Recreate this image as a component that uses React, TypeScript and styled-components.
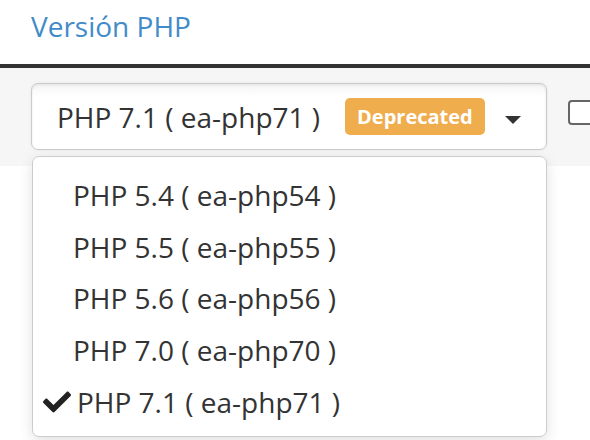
import React from 'react';
import styled, { createGlobalStyle } from 'styled-components';
import { FaCheck } from 'react-icons/fa';

const colors = {
  text: '#333',
  title: '#428bca',
  band: '#f6f6f6',
  border: '#ccc',
  warning: '#f0ad4e',
};

const versions = [
  { label: 'PHP 5.4 ( ea-php54 )', id: 'ea-php54' },
  { label: 'PHP 5.5 ( ea-php55 )', id: 'ea-php55' },
  { label: 'PHP 5.6 ( ea-php56 )', id: 'ea-php56' },
  { label: 'PHP 7.0 ( ea-php70 )', id: 'ea-php70' },
  { label: 'PHP 7.1 ( ea-php71 )', id: 'ea-php71' },
];

const selected = 'ea-php71';

const App = () => {
  const current = versions.find((v) => v.id === selected)!;
  return (
    <Page>
      <GlobalStyle />
      <Header>
        <Title>Versión PHP</Title>
      </Header>
      <Band>
        <SelectWrap>
          <Select>
            <SelectText>{current.label}</SelectText>
            <Badge>Deprecated</Badge>
            <Caret />
          </Select>
          <Menu>
            {versions.map((v) => (
              <Option key={v.id} $checked={v.id === selected}>
                {v.id === selected && <FaCheck size={28} />}
                <span>{v.label}</span>
              </Option>
            ))}
          </Menu>
        </SelectWrap>
        <Checkbox />
      </Band>
    </Page>
  );
};

export default App;

const GlobalStyle = createGlobalStyle`
  html {
    overflow: hidden;
  }
  body {
    margin: 0;
    padding: 0;
    background: #fff;
    font-family: 'Open Sans', 'Noto Sans', sans-serif;
    color: ${colors.text};
  }
`;

const Page = styled.div`
  min-height: 100vh;
  overflow: hidden;
`;

const Header = styled.header`
  height: 57px;
  padding: 7px 0 0 31px;
  border-bottom: 4px solid #333;
`;

const Title = styled.h1`
  margin: 0;
  font-size: 28px;
  font-weight: 400;
  line-height: 38px;
  color: ${colors.title};
`;

const Band = styled.div`
  display: flex;
  align-items: flex-start;
  gap: 21px;
  padding: 15px 0 16px 31px;
  background: ${colors.band};
`;

const SelectWrap = styled.div`
  position: relative;
  z-index: 1;
  flex: 0 0 516px;
`;

const Select = styled.div`
  display: flex;
  align-items: center;
  height: 67px;
  box-sizing: border-box;
  padding: 0 25px;
  border: 1px solid ${colors.border};
  border-radius: 7px;
  background: linear-gradient(#f4f4f4, #fff 12px);
  box-shadow: inset 0 1px 3px rgba(0, 0, 0, 0.08), 0 0 3px rgba(0, 0, 0, 0.08);
`;

const SelectText = styled.span`
  font-size: 28px;
  line-height: 38px;
`;

const Badge = styled.span`
  display: inline-flex;
  align-items: center;
  height: 37px;
  margin-left: 25px;
  padding: 0 12px;
  border-radius: 5px;
  background: ${colors.warning};
  color: #fff;
  font-size: 20px;
  font-weight: 700;
`;

const Caret = styled.span`
  margin-left: auto;
  margin-top: 6px;
  width: 0;
  height: 0;
  border-left: 8px solid transparent;
  border-right: 8px solid transparent;
  border-top: 8px solid ${colors.text};
`;

const Menu = styled.ul`
  position: absolute;
  top: 73px;
  left: 1px;
  right: 0;
  margin: 0;
  padding: 12px 0 8px;
  list-style: none;
  background: #fff;
  border: 1px solid ${colors.border};
  border-radius: 7px;
  box-shadow: 0 4px 14px rgba(0, 0, 0, 0.12);
`;

const Option = styled.li<{ $checked?: boolean }>`
  display: flex;
  align-items: center;
  gap: 6px;
  height: 51.75px;
  padding-left: ${(p) => (p.$checked ? '10px' : '40px')};
  font-size: 28px;

  svg {
    color: #222;
  }
`;

const Checkbox = styled.span`
  flex: 0 0 26px;
  height: 25px;
  margin-top: 17px;
  box-sizing: border-box;
  border: 2px solid #666;
  border-radius: 4px;
  background: #fff;
`;
